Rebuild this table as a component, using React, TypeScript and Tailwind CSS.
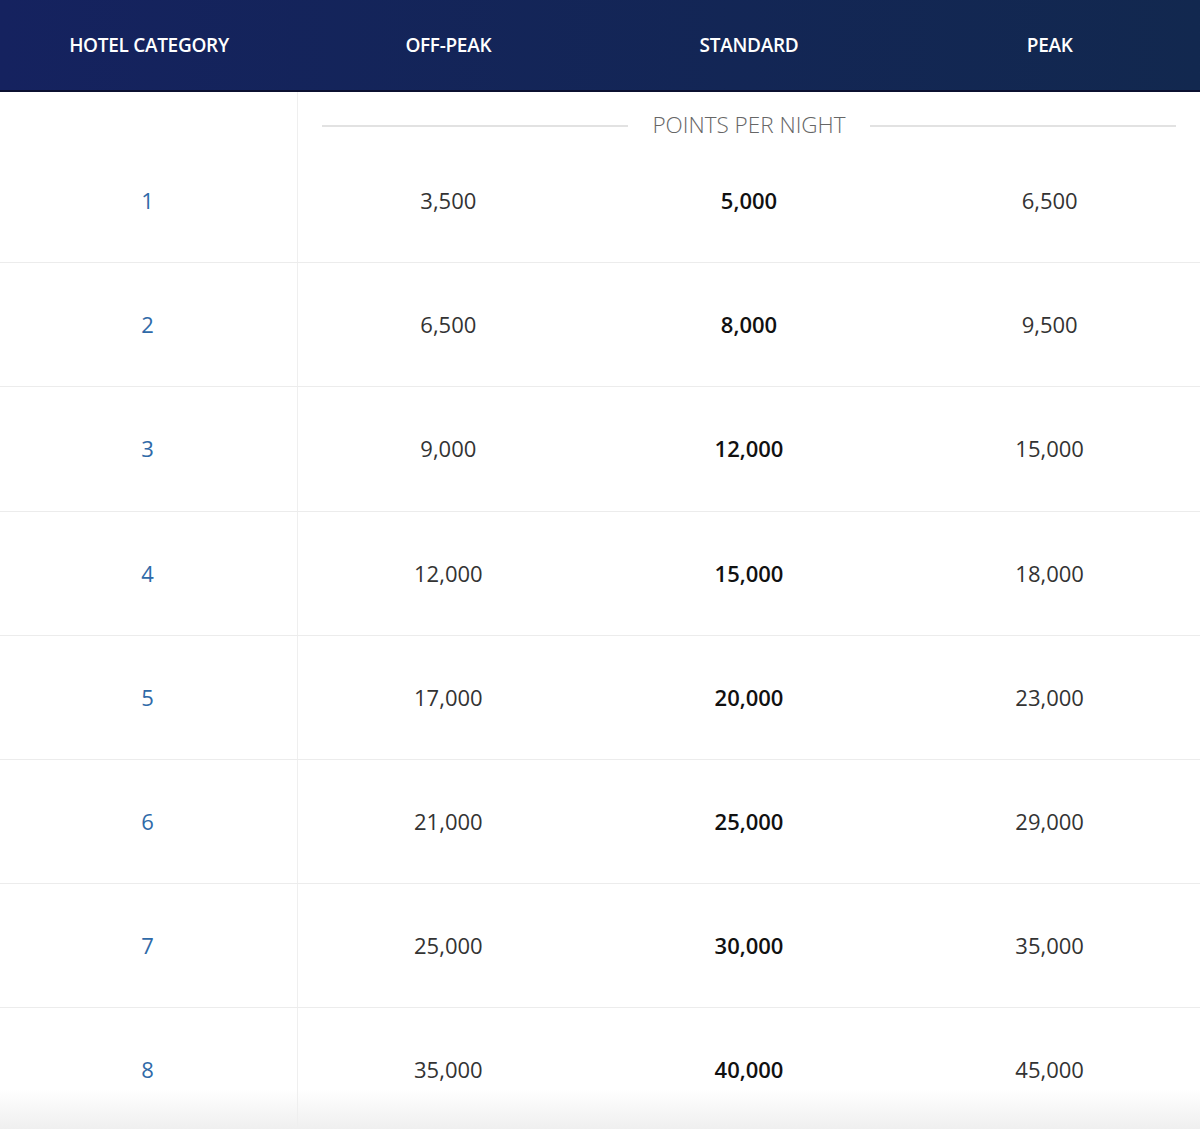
import React from 'react';

/**
 * Award chart rows: category, off-peak, standard, peak
 */
const rows: [string, string, string, string][] = [
    ['1', '3,500', '5,000', '6,500'],
    ['2', '6,500', '8,000', '9,500'],
    ['3', '9,000', '12,000', '15,000'],
    ['4', '12,000', '15,000', '18,000'],
    ['5', '17,000', '20,000', '23,000'],
    ['6', '21,000', '25,000', '29,000'],
    ['7', '25,000', '30,000', '35,000'],
    ['8', '35,000', '40,000', '45,000'],
];

const headers = ['HOTEL CATEGORY', 'OFF-PEAK', 'STANDARD', 'PEAK'];

export default function App() {
    return (
        <div
            className="relative w-[1200px] h-[1129px] overflow-hidden bg-white"
            style={{ fontFamily: '"Open Sans", "Liberation Sans", sans-serif' }}
        >
            {/* Header */}
            <div className="grid grid-cols-[298px_1fr_1fr_1fr] h-[92px] border-b-2 border-[#0b1030] bg-gradient-to-r from-[#15225f] to-[#12284f]">
                {headers.map(h => (
                    <div
                        key={h}
                        className="flex items-center justify-center pt-[1px] text-[19px] font-semibold tracking-[-0.3px] text-white"
                    >
                        {h}
                    </div>
                ))}
            </div>

            {/* Points per night band */}
            <div className="grid grid-cols-[298px_1fr] h-[47px]">
                <div className="border-r border-[#efefef]" />
                <div className="flex items-start gap-6 px-6 pt-[18px]">
                    <div className="mt-[15px] h-[2px] flex-1 bg-[#e2e2e2]" />
                    <span className="text-[22.5px] font-light leading-[30px] text-[#666666]">
                        POINTS PER NIGHT
                    </span>
                    <div className="mt-[15px] h-[2px] flex-1 bg-[#e2e2e2]" />
                </div>
            </div>

            {/* Rows */}
            {rows.map(([cat, off, std, peak]) => (
                <div
                    key={cat}
                    className="grid grid-cols-[298px_1fr_1fr_1fr] h-[124.2px] border-b border-[#ececec] text-[22px]"
                >
                    <div className="flex items-center justify-center pr-[2px] border-r border-[#efefef] text-[#2f6aa8]">
                        {cat}
                    </div>
                    <div className="flex items-center justify-center text-[#333333]">{off}</div>
                    <div className="flex items-center justify-center font-semibold text-[#111111]">{std}</div>
                    <div className="flex items-center justify-center text-[#333333]">{peak}</div>
                </div>
            ))}

            {/* Bottom fade */}
            <div className="pointer-events-none absolute bottom-0 left-0 right-0 h-[40px] bg-gradient-to-b from-white/0 to-[#efefef]" />
        </div>
    );
}
